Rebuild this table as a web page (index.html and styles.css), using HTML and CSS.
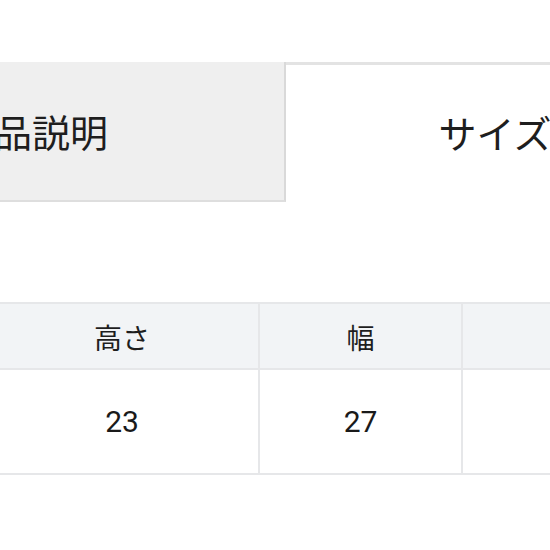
FILE: index.html
```html
<!DOCTYPE html>
<html lang="ja">
<head>
<meta charset="utf-8">
<link rel="stylesheet" href="styles.css">
</head>
<body>
<div class="page">
  <div class="tabs">
    <div class="tab tab-inactive">商品説明</div>
    <div class="tab tab-active">サイズ表</div>
  </div>
  <div class="size-table">
    <div class="cell head col-first">高さ</div>
    <div class="cell head">幅</div>
    <div class="cell head"></div>
    <div class="cell body col-first">23</div>
    <div class="cell body">27</div>
    <div class="cell body"></div>
  </div>
</div>
</body>
</html>
```
FILE: styles.css
```css
html, body {
  margin: 0;
  padding: 0;
  background: #ffffff;
  overflow: hidden;
}
body {
  width: 550px;
  height: 550px;
  font-family: "Noto Sans CJK JP", "Noto Sans", sans-serif;
  color: #1e1e1e;
}
.page {
  padding-top: 62px;
}
.tabs {
  display: flex;
  margin-left: -220px;
  width: 1100px;
}
.tab {
  box-sizing: border-box;
  height: 140px;
  display: flex;
  align-items: center;
  justify-content: center;
  font-size: 38px;
  line-height: 1;
}
.tab-inactive {
  width: 506px;
  background: #efefef;
  border-right: 2px solid #d9d9d9;
  border-bottom: 2px solid #dedede;
}
.tab-active {
  width: 456px;
  background: #ffffff;
  border-top: 3px solid #e3e3e3;
  padding-bottom: 3px;
}
.size-table {
  margin-top: 100px;
  margin-left: -14px;
  display: grid;
  grid-template-columns: 274px 203px 203px;
  border-top: 2px solid #e6e7e9;
}
.cell {
  box-sizing: border-box;
  display: flex;
  align-items: center;
  justify-content: center;
  border-right: 2px solid #e6e7e9;
  border-bottom: 2px solid #e6e7e9;
  line-height: 1;
}
.head {
  height: 66px;
  background: #f2f4f6;
  font-size: 28px;
  padding-top: 1px;
}
.body {
  height: 105px;
  background: #ffffff;
  font-family: "Roboto", "Liberation Sans", sans-serif;
  font-size: 30px;
  color: #1a1a1a;
}
```
